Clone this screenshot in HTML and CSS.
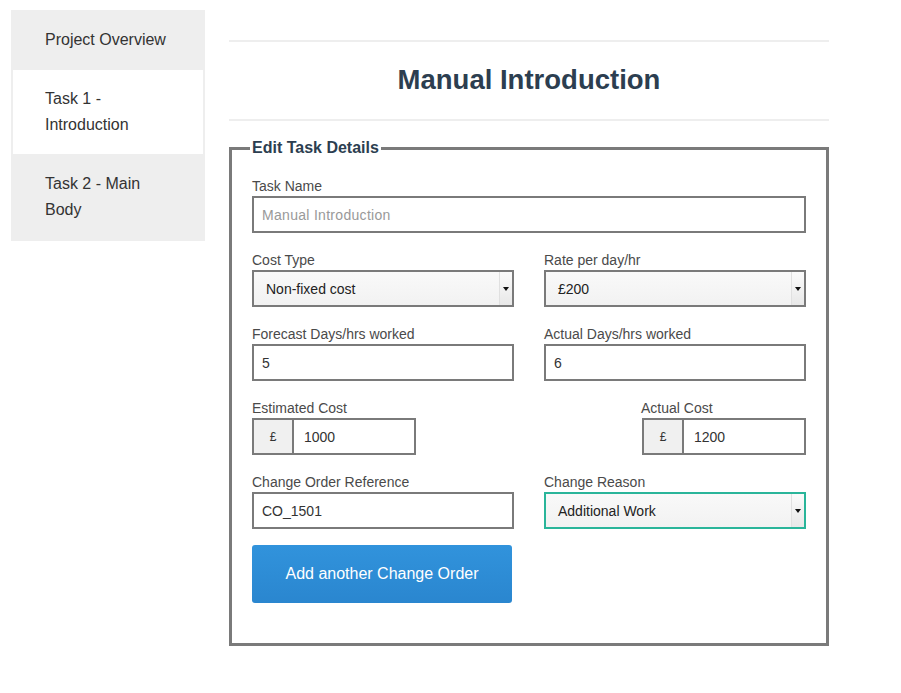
FILE: index.html
```html
<!DOCTYPE html>
<html lang="en">
<head>
<meta charset="utf-8">
<title>Manual Introduction</title>
<link rel="stylesheet" href="styles.css">
</head>
<body>
<div class="page">
  <nav class="sidebar">
    <a class="nav-item">Project Overview</a>
    <a class="nav-item active">Task 1 - Introduction</a>
    <a class="nav-item last">Task 2 - Main Body</a>
  </nav>
  <main class="main">
    <header class="title-bar">
      <h1>Manual Introduction</h1>
    </header>
    <fieldset class="panel">
      <legend>Edit Task Details</legend>
      <div class="field">
        <label>Task Name</label>
        <input class="input" type="text" placeholder="Manual Introduction">
      </div>
      <div class="row">
        <div class="field">
          <label>Cost Type</label>
          <div class="select">
            <span>Non-fixed cost</span>
            <span class="arrow"><svg width="6" height="4" viewBox="0 0 6 4"><path d="M0 0h6L3 4z" fill="#111"/></svg></span>
          </div>
        </div>
        <div class="field">
          <label>Rate per day/hr</label>
          <div class="select">
            <span>£200</span>
            <span class="arrow"><svg width="6" height="4" viewBox="0 0 6 4"><path d="M0 0h6L3 4z" fill="#111"/></svg></span>
          </div>
        </div>
      </div>
      <div class="row">
        <div class="field">
          <label>Forecast Days/hrs worked</label>
          <input class="input" type="text" value="5">
        </div>
        <div class="field">
          <label>Actual Days/hrs worked</label>
          <input class="input" type="text" value="6">
        </div>
      </div>
      <div class="row">
        <div class="field">
          <label>Estimated Cost</label>
          <div class="group">
            <span class="addon">£</span>
            <input class="group-input" type="text" value="1000">
          </div>
        </div>
        <div class="field right">
          <label>Actual Cost</label>
          <div class="group">
            <span class="addon">£</span>
            <input class="group-input" type="text" value="1200">
          </div>
        </div>
      </div>
      <div class="row">
        <div class="field">
          <label>Change Order Reference</label>
          <input class="input" type="text" value="CO_1501">
        </div>
        <div class="field">
          <label>Change Reason</label>
          <div class="select focus">
            <span>Additional Work</span>
            <span class="arrow"><svg width="6" height="4" viewBox="0 0 6 4"><path d="M0 0h6L3 4z" fill="#111"/></svg></span>
          </div>
        </div>
      </div>
      <button class="btn" type="button">Add another Change Order</button>
    </fieldset>
  </main>
</div>
</body>
</html>
```

FILE: styles.css
```css
* { box-sizing: border-box; }
html, body { margin: 0; background: #fff; }
body {
  font-family: "Liberation Sans", Arial, sans-serif;
  color: #333;
}
.page {
  display: flex;
  align-items: flex-start;
  gap: 24px;
  padding: 10px 11px;
}
.sidebar {
  width: 194px;
  background: #eeeeee;
  display: flex;
  flex-direction: column;
}
.nav-item {
  display: block;
  padding: 17px 36px 17px 34px;
  font-size: 16px;
  line-height: 26px;
  color: #333;
}
.nav-item.active {
  background: #fff;
  margin: 0 2px;
  padding: 16px 34px 16px 32px;
}
.nav-item.last { padding-bottom: 18px; }
.main {
  width: 600px;
  display: flex;
  flex-direction: column;
}
.title-bar {
  margin-top: 30px;
  border-top: 2px solid #eeeeee;
  border-bottom: 2px solid #eeeeee;
  height: 81px;
  display: flex;
  align-items: center;
  justify-content: center;
  padding-bottom: 1px;
}
.title-bar h1 {
  margin: 0;
  font-size: 27.5px;
  font-weight: bold;
  color: #2c3e50;
  letter-spacing: 0;
}
.panel {
  margin: 17px 0 0;
  border: 3px solid #7a7a7a;
  padding: 18px 20px 40px;
  min-width: 0;
}
.panel legend {
  font-size: 16px;
  font-weight: bold;
  color: #2c3e50;
  padding: 0 2px;
  margin-left: -2px;
  line-height: 20px;
}
.row {
  display: flex;
  gap: 30px;
}
.row .field { flex: 1; min-width: 0; }
.field {
  display: flex;
  flex-direction: column;
  margin-bottom: 17px;
}
.field.right { align-items: flex-end; }
.field.right label { align-self: flex-start; margin-left: 97px; }
label {
  display: block;
  font-size: 14px;
  line-height: 20px;
  color: #4a4a4a;
}
.input {
  height: 37px;
  border: 2px solid #7a7a7a;
  padding: 0 8px;
  font-family: inherit;
  font-size: 14px;
  color: #333;
  background: #fff;
  width: 100%;
  outline: none;
}
.input::placeholder { color: #999; letter-spacing: 0.3px; }
.select {
  position: relative;
  height: 37px;
  border: 2px solid #7a7a7a;
  background: linear-gradient(#f9f9f9, #f2f2f2);
  display: flex;
  align-items: center;
  padding: 0 12px;
  font-size: 14px;
  color: #222;
}
.select.focus { border-color: #2ab59a; }
.select .arrow {
  position: absolute;
  right: 0;
  top: 0;
  bottom: 0;
  width: 13px;
  background: linear-gradient(#fbfbfb, #e8e8e8);
  border-left: 1px solid #e0e0e0;
  display: flex;
  align-items: center;
  justify-content: center;
}
.group {
  display: flex;
  width: 164px;
  height: 37px;
  border: 2px solid #7a7a7a;
}
.addon {
  width: 40px;
  background: #f0f0f0;
  border-right: 2px solid #7a7a7a;
  display: flex;
  align-items: center;
  justify-content: center;
  font-size: 12px;
  color: #333;
}
.group-input {
  flex: 1;
  min-width: 0;
  border: 0;
  padding: 0 10px;
  font-family: inherit;
  font-size: 14px;
  color: #333;
  outline: none;
}
.btn {
  margin-top: -1px;
  width: 260px;
  height: 58px;
  border: 0;
  border-radius: 3px;
  background: linear-gradient(#3193dc, #2a86cf);
  color: #fff;
  font-family: inherit;
  font-size: 16px;
  cursor: pointer;
}
```
